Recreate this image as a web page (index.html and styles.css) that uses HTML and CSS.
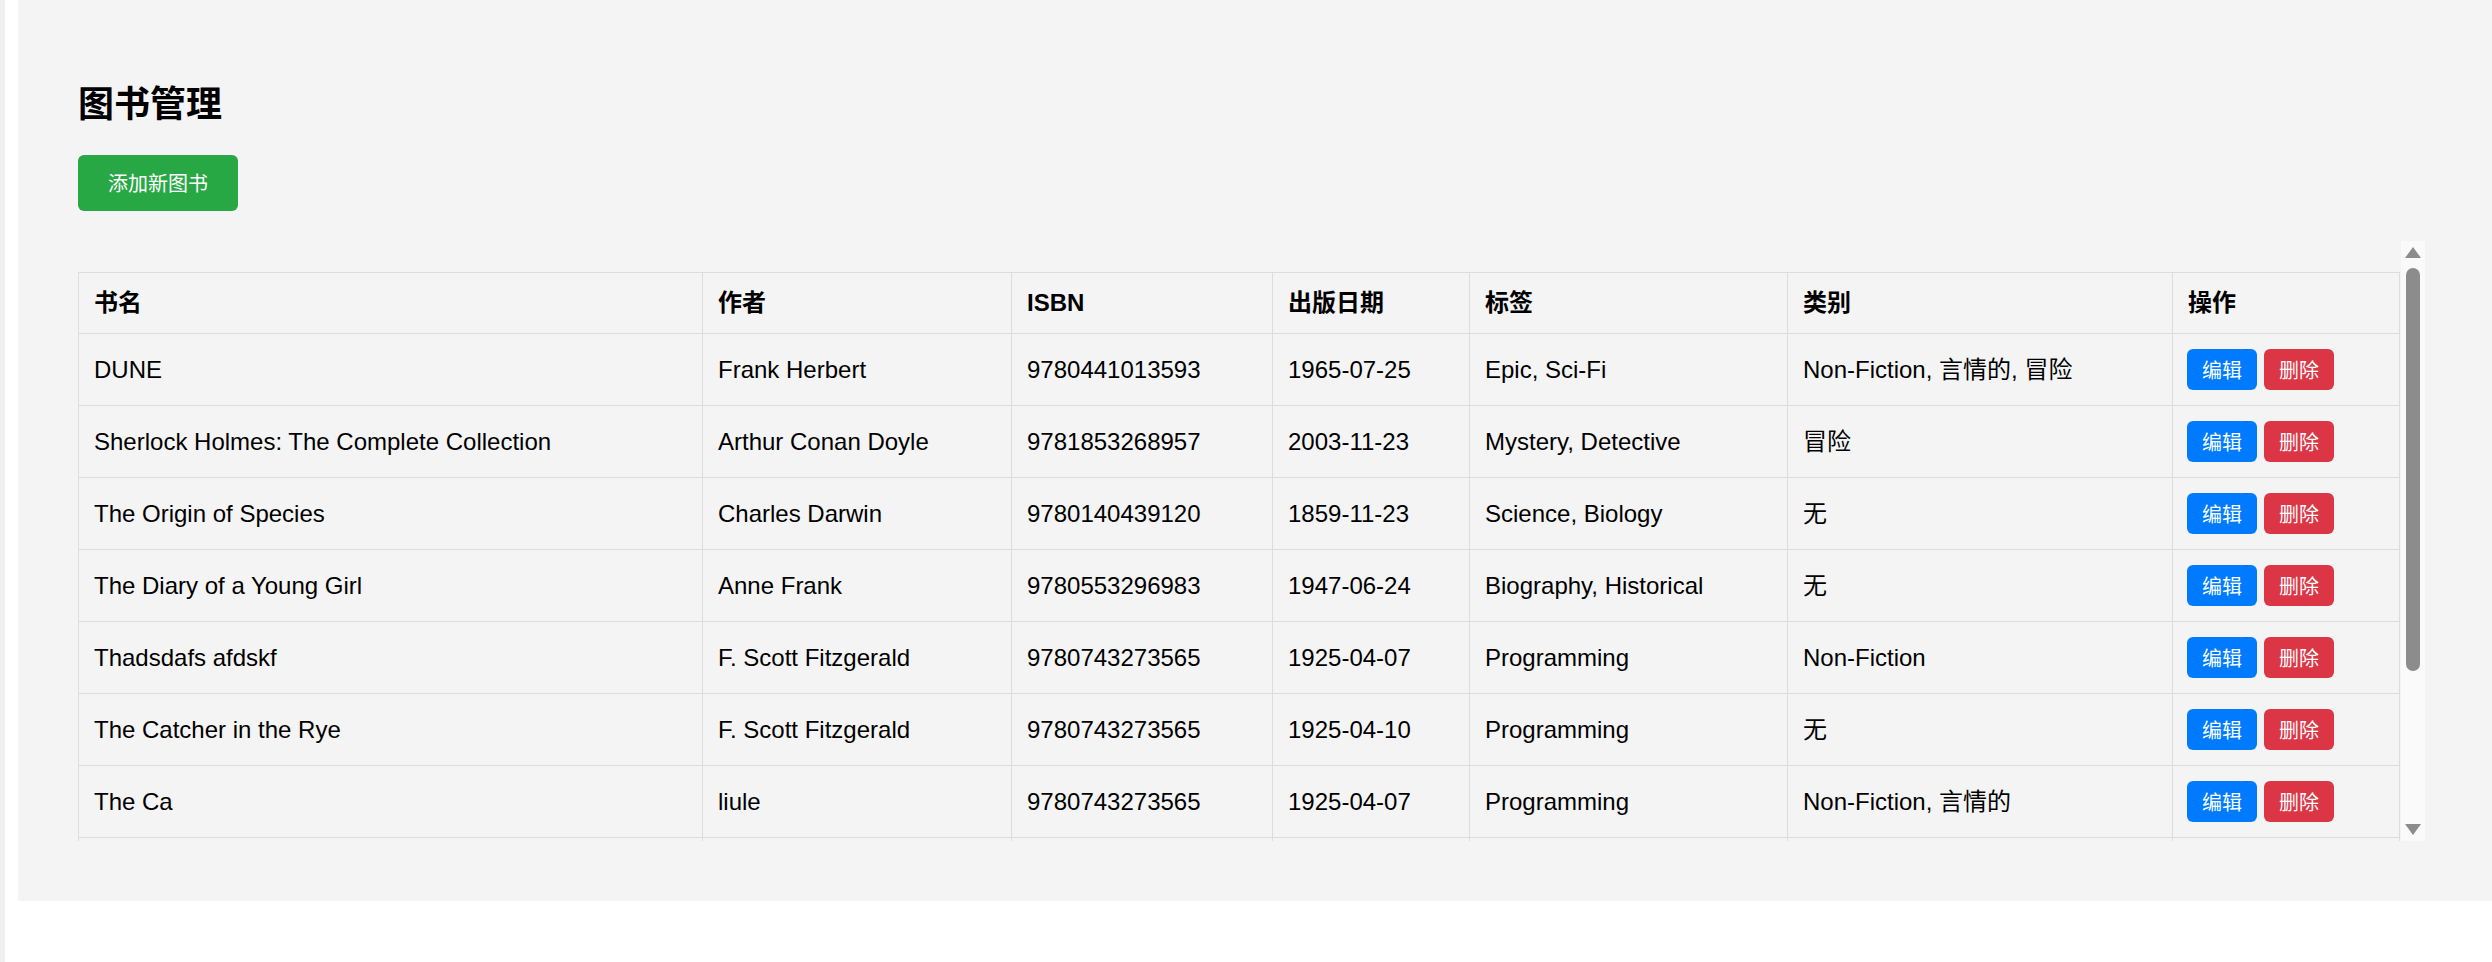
FILE: index.html
```html
<!DOCTYPE html>
<html lang="zh-CN">
<head>
<meta charset="utf-8">
<title>图书管理</title>
<link rel="stylesheet" href="styles.css">
</head>
<body>
<div class="page">
  <div class="edge"></div>
  <main class="panel">
    <h1 class="title">图书管理</h1>
    <button class="btn-add">添加新图书</button>
    <div class="scroll-area">
      <div class="table-wrap">
        <table class="books">
          <colgroup>
            <col class="c1"><col class="c2"><col class="c3"><col class="c4"><col class="c5"><col class="c6"><col class="c7">
          </colgroup>
          <thead>
            <tr><th>书名</th><th>作者</th><th>ISBN</th><th>出版日期</th><th>标签</th><th>类别</th><th>操作</th></tr>
          </thead>
          <tbody>
            <tr><td>DUNE</td><td>Frank Herbert</td><td>9780441013593</td><td>1965-07-25</td><td>Epic, Sci-Fi</td><td>Non-Fiction, 言情的, 冒险</td><td><div class="actions"><button class="btn-edit">编辑</button><button class="btn-del">删除</button></div></td></tr>
            <tr><td>Sherlock Holmes: The Complete Collection</td><td>Arthur Conan Doyle</td><td>9781853268957</td><td>2003-11-23</td><td>Mystery, Detective</td><td>冒险</td><td><div class="actions"><button class="btn-edit">编辑</button><button class="btn-del">删除</button></div></td></tr>
            <tr><td>The Origin of Species</td><td>Charles Darwin</td><td>9780140439120</td><td>1859-11-23</td><td>Science, Biology</td><td>无</td><td><div class="actions"><button class="btn-edit">编辑</button><button class="btn-del">删除</button></div></td></tr>
            <tr><td>The Diary of a Young Girl</td><td>Anne Frank</td><td>9780553296983</td><td>1947-06-24</td><td>Biography, Historical</td><td>无</td><td><div class="actions"><button class="btn-edit">编辑</button><button class="btn-del">删除</button></div></td></tr>
            <tr><td>Thadsdafs afdskf</td><td>F. Scott Fitzgerald</td><td>9780743273565</td><td>1925-04-07</td><td>Programming</td><td>Non-Fiction</td><td><div class="actions"><button class="btn-edit">编辑</button><button class="btn-del">删除</button></div></td></tr>
            <tr><td>The Catcher in the Rye</td><td>F. Scott Fitzgerald</td><td>9780743273565</td><td>1925-04-10</td><td>Programming</td><td>无</td><td><div class="actions"><button class="btn-edit">编辑</button><button class="btn-del">删除</button></div></td></tr>
            <tr><td>The Ca</td><td>liule</td><td>9780743273565</td><td>1925-04-07</td><td>Programming</td><td>Non-Fiction, 言情的</td><td><div class="actions"><button class="btn-edit">编辑</button><button class="btn-del">删除</button></div></td></tr>
            <tr class="row-hidden"><td></td><td></td><td></td><td></td><td></td><td></td><td></td></tr>
          </tbody>
        </table>
      </div>
      <div class="scrollbar">
        <div class="arrow-up"></div>
        <div class="track"><div class="thumb"></div></div>
        <div class="arrow-down"></div>
      </div>
    </div>
  </main>
</div>
</body>
</html>
```
FILE: styles.css
```css
html, body {
  margin: 0;
  padding: 0;
  background: #ffffff;
}
body {
  font-family: "Liberation Sans", "Noto Sans CJK SC", sans-serif;
  color: #000;
}
.page {
  display: flex;
  align-items: flex-start;
  height: 962px;
  overflow: hidden;
}
.edge {
  width: 5px;
  align-self: stretch;
  background: #f0f0f0;
  flex: none;
}
.panel {
  flex: 1;
  margin-left: 13px;
  background: #f4f4f4;
  padding: 60px 68px 60px 60px;
  min-width: 0;
}
.title {
  font-family: "Noto Sans CJK SC", sans-serif;
  font-size: 36px;
  font-weight: 700;
  line-height: 47px;
  margin: 18px 0 30px 0;
}
.btn-add {
  display: block;
  font-family: "Noto Sans CJK SC", sans-serif;
  font-size: 20px;
  line-height: 26px;
  height: 56px;
  padding: 15px 30px;
  width: 160px;
  color: #fff;
  background: #28a745;
  border: none;
  border-radius: 6px;
  margin: 0 0 30px 0;
}
.scroll-area {
  display: flex;
  height: 600px;
}
.table-wrap {
  flex: none;
  width: 2322px;
  overflow: hidden;
  padding-top: 31px;
  box-sizing: border-box;
}
.books {
  width: 2322px;
  table-layout: fixed;
  border-collapse: separate;
  border-spacing: 0;
  border-top: 1px solid #dddddd;
  border-left: 1px solid #dddddd;
  font-size: 24px;
}
.c1 { width: 624px; }
.c2 { width: 309px; }
.c3 { width: 261px; }
.c4 { width: 197px; }
.c5 { width: 318px; }
.c6 { width: 385px; }
.c7 { width: 227px; }
.books th, .books td {
  border-right: 1px solid #dddddd;
  border-bottom: 1px solid #dddddd;
  padding: 15px;
  text-align: left;
  vertical-align: middle;
  white-space: nowrap;
  overflow: hidden;
}
.books th {
  font-weight: 700;
  line-height: 30px;
  height: 30px;
}
.books td {
  line-height: 30px;
  height: 41px;
}
.actions {
  display: flex;
  gap: 7px;
  margin-left: -1px;
}
.btn-edit, .btn-del {
  font-family: "Noto Sans CJK SC", sans-serif;
  font-size: 20px;
  line-height: 29px;
  height: 41px;
  width: 70px;
  padding: 6px 0;
  color: #fff;
  border: none;
  border-radius: 6px;
  text-align: center;
}
.btn-edit { background: #007bff; }
.btn-del { background: #dc3545; }
.scrollbar {
  flex: none;
  width: 24px;
  margin-left: 1px;
  background: #fafafa;
  display: flex;
  flex-direction: column;
  align-items: center;
}
.arrow-up {
  margin-top: 6px;
  width: 0;
  height: 0;
  border-left: 8px solid transparent;
  border-right: 8px solid transparent;
  border-bottom: 11px solid #8c8c8c;
}
.track {
  flex: 1;
  width: 100%;
  display: flex;
  justify-content: center;
  padding-top: 10px;
}
.thumb {
  width: 14px;
  height: 403px;
  border-radius: 7px;
  background: #8c8c8c;
}
.arrow-down {
  margin-bottom: 6px;
  width: 0;
  height: 0;
  border-left: 8px solid transparent;
  border-right: 8px solid transparent;
  border-top: 11px solid #8c8c8c;
}
```
